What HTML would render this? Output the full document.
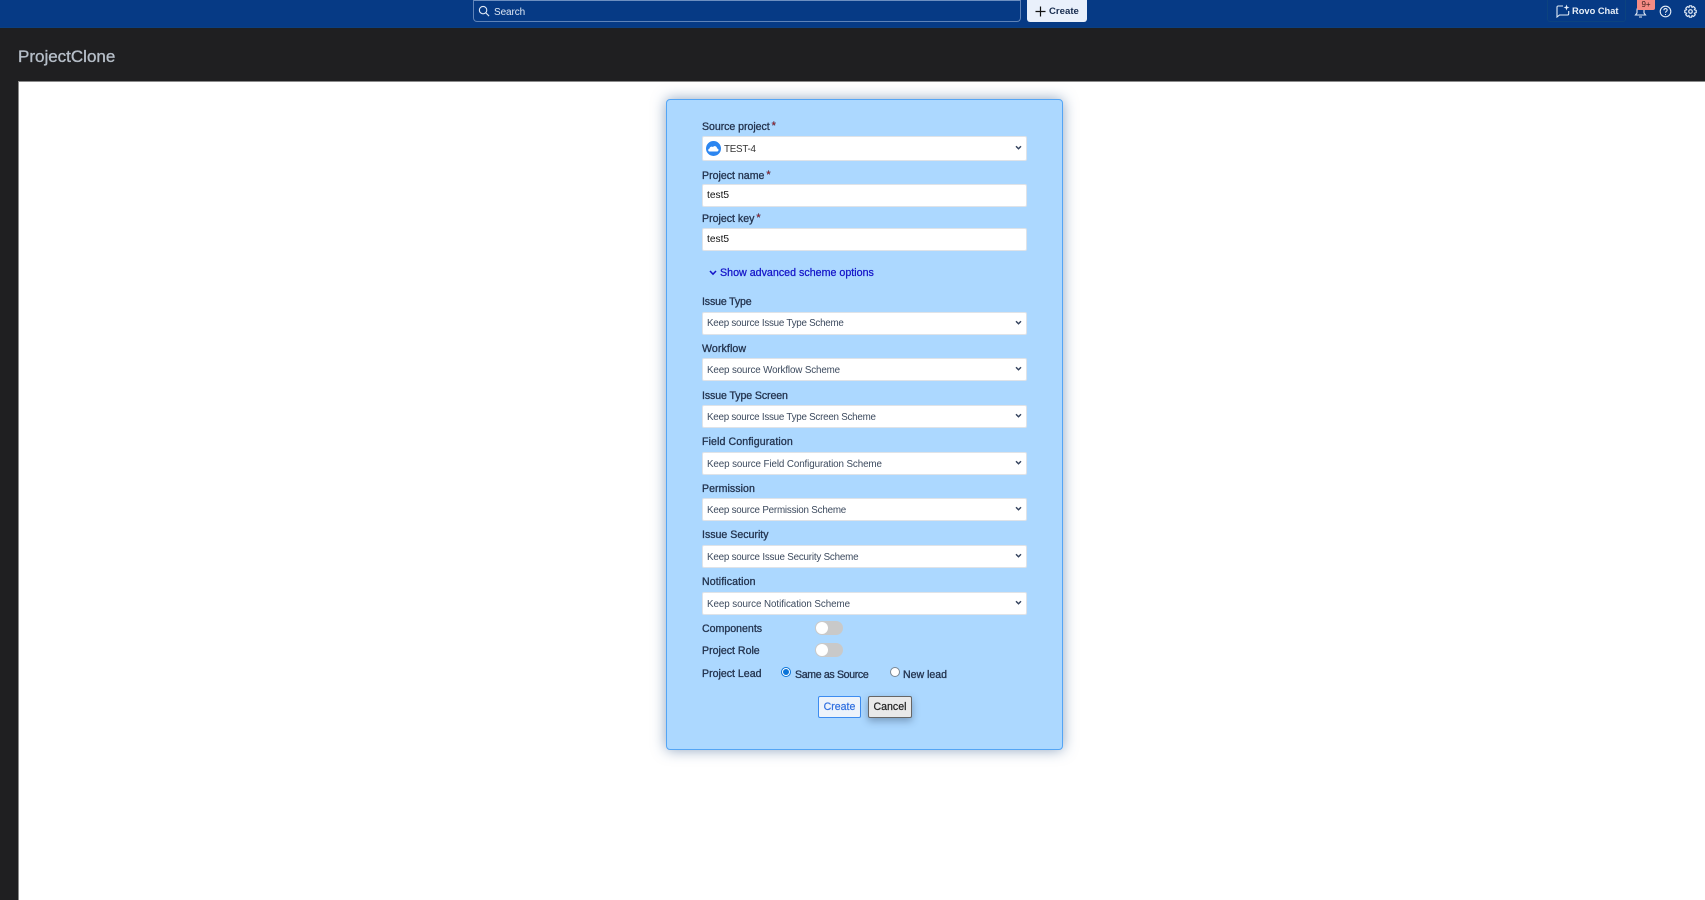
<!DOCTYPE html>
<html lang="en"><head><meta charset="utf-8"><title>ProjectClone</title>
<style>
*{box-sizing:border-box}
html,body{margin:0;padding:0;width:1705px;height:900px;overflow:hidden;background:#1f1f21;font-family:"Liberation Sans",sans-serif}
body{filter:blur(.3px)}
.a{position:absolute;white-space:nowrap}
#top{left:0;top:0;width:1705px;height:28px;background:#063a85;border-bottom:1px solid #0b3f80}
#search{left:473px;top:0;width:548px;height:22px;border:1px solid #5f83b8;border-top-color:#6d8fc0;border-radius:0 0 4px 4px;background:#063a85}
#main{left:18px;top:81px;width:1687px;height:819px;background:#fff;border-top:1px solid #8a8a8a;border-left:1px solid #8a8a8a}
#card{left:666px;top:99px;width:397px;height:651px;background:#acd8ff;border:1px solid #54a5f5;border-radius:4px;box-shadow:0 0 14px rgba(50,90,140,.55)}
.l{left:702px;font-size:10.6px;line-height:14px;color:#24344f;font-weight:400;-webkit-text-stroke:.3px #24344f}
.r{color:#f01515;font-size:11px;position:relative;top:-1px;margin-left:2px}
.s{left:702px;width:325px;height:23px;background:#fff;border:1px solid #dfe3e8;border-radius:2px;font-size:9.8px;letter-spacing:-.24px;line-height:23px;color:#3c4a5e;padding-left:4px}
.i{color:#111;padding-left:4px;font-size:10.2px;letter-spacing:0;line-height:21px;width:325px}
.s svg{position:absolute;right:4px;top:7px}
.t{width:28px;height:14px;border-radius:7px;background:#c9c9c9}
.t i{position:absolute;left:1px;top:1px;width:12px;height:12px;border-radius:50%;background:#fff}
.rad{width:10px;height:10px;border-radius:50%;background:#fff;border:1px solid #7a8794}
.b{height:22px;font-size:10.6px;line-height:20px;text-align:center;border-radius:2px;-webkit-text-stroke:.2px currentColor}
svg{display:block}
</style></head><body>
<div class="a" id="top"></div>
<div class="a" id="search"></div>
<svg class="a" style="left:478px;top:5px" width="12" height="12" viewBox="0 0 13 13" fill="none" stroke="#dfe8f5" stroke-width="1.2"><circle cx="5.5" cy="5.5" r="4"/><path d="M8.5 8.5L12 12"/></svg>
<div class="a" style="left:494px;top:5px;font-size:10px;letter-spacing:-.1px;line-height:15px;color:#dfe8f5">Search</div>
<div class="a" style="left:1027px;top:0;width:60px;height:22px;background:#e9f0fb;border-radius:0 0 3px 3px"></div>
<svg class="a" style="left:1035px;top:6px" width="11" height="11" viewBox="0 0 11 11" stroke="#111" stroke-width="1.2"><path d="M5.5 0.5V10.5M0.5 5.5H10.5"/></svg>
<div class="a" style="left:1049px;top:5px;font-size:9.6px;line-height:14px;color:#172b4d;font-weight:700">Create</div>
<div class="a" style="left:1547px;top:0;width:79px;height:22px;border:1px solid #0c437f;border-top:0;border-radius:0 0 3px 3px"></div>
<svg class="a" style="left:1556px;top:4px" width="14" height="14" viewBox="0 0 14 14" fill="none" stroke="#e3ecf7" stroke-width="1.1"><path d="M7 2H2.2C1.5 2 1 2.5 1 3.2V13L3.5 11H11.5C12.2 11 12.7 10.5 12.7 9.8V7"/><path d="M10.5 0.5L11.3 2.7L13.5 3.5L11.3 4.3L10.5 6.5L9.7 4.3L7.5 3.5L9.7 2.7Z" fill="#e3ecf7" stroke="none"/></svg>
<div class="a" style="left:1572px;top:4px;font-size:9.3px;line-height:14px;color:#e8eff8;font-weight:700">Rovo Chat</div>
<svg class="a" style="left:1634px;top:5px" width="13" height="13" viewBox="0 0 13 13" fill="none" stroke="#e3ecf7" stroke-width="1.1"><path d="M1.5 10H11.5L10 8V4.8C10 2.8 8.5 1.2 6.5 1.2S3 2.8 3 4.8V8ZM5 12H8"/></svg>
<div class="a" style="left:1637px;top:0;width:18px;height:10px;background:#f58b84;border-radius:0 0 2px 2px;font-size:8px;line-height:9px;text-align:center;color:#40201c">9+</div>
<svg class="a" style="left:1659px;top:5px" width="13" height="13" viewBox="0 0 13 13" fill="none" stroke="#e3ecf7" stroke-width="1.1"><circle cx="6.5" cy="6.5" r="5.3"/><path d="M4.9 5.2C4.9 3 8.2 3 8.2 5.1C8.2 6.3 6.5 6.3 6.5 7.7M6.5 9V10"/></svg>
<svg class="a" style="left:1684px;top:5px" width="13" height="13" viewBox="0 0 13 13" fill="none" stroke="#e3ecf7" stroke-width="1.2"><circle cx="6.5" cy="6.5" r="1.8"/><path d="M5.4 .8H7.6L8 2.4L9.5 1.6L11.2 3.2L10.4 4.7L12.2 5.4V7.6L10.4 8.2L11.2 9.8L9.6 11.4L8 10.6L7.6 12.2H5.4L5 10.6L3.4 11.4L1.8 9.8L2.6 8.2L.8 7.6V5.4L2.6 4.7L1.8 3.2L3.4 1.6L5 2.4Z"/></svg>

<div class="a" style="left:18px;top:46px;font-size:17px;line-height:22px;color:#b6bec8;-webkit-text-stroke:.35px #b6bec8">ProjectClone</div>
<div class="a" id="main"></div>
<div class="a" id="card"></div>

<div class="a l" style="top:120px;letter-spacing:-.05px">Source project<span class="r">*</span></div>
<div class="a s" style="top:136px;height:25px;padding-left:21px;line-height:25px;color:#333">TEST-4<svg width="7" height="5" viewBox="0 0 8 6" fill="none" stroke="#33415c" stroke-width="1.7" style="top:8px"><path d="M1 1.5L4 4.5L7 1.5"/></svg></div>
<svg class="a" style="left:706px;top:141px" width="15" height="15" viewBox="0 0 15 15"><circle cx="7.5" cy="7.5" r="7.5" fill="#2c86f0"/><path d="M3.5 10.5C1.8 10.5 1.8 7.8 3.5 7.6C3.7 5.8 5.8 5 7 6C8 4.4 11 5 11 7.4C13 7.6 13 10.5 11 10.5Z" fill="#fff"/></svg>

<div class="a l" style="top:169px">Project name<span class="r">*</span></div>
<div class="a s i" style="top:184px">test5</div>
<div class="a l" style="top:212px">Project key<span class="r">*</span></div>
<div class="a s i" style="top:228px">test5</div>

<svg class="a" style="left:709px;top:270px" width="8" height="6" viewBox="0 0 8 6" fill="none" stroke="#1414c8" stroke-width="1.5"><path d="M1 1L4 4.2L7 1"/></svg>
<div class="a" style="left:720px;top:266px;font-size:10.7px;line-height:14px;color:#1414c8;-webkit-text-stroke:.25px #1414c8">Show advanced scheme options</div>

<div class="a l" style="top:295px;letter-spacing:-.15px">Issue Type</div>
<div class="a s" style="top:312px;line-height:22px">Keep source Issue Type Scheme<svg width="7" height="5" viewBox="0 0 8 6" fill="none" stroke="#33415c" stroke-width="1.7"><path d="M1 1.5L4 4.5L7 1.5"/></svg></div>
<div class="a l" style="top:342px;letter-spacing:.1px">Workflow</div>
<div class="a s" style="top:358px;letter-spacing:-.13px">Keep source Workflow Scheme<svg width="7" height="5" viewBox="0 0 8 6" fill="none" stroke="#33415c" stroke-width="1.7"><path d="M1 1.5L4 4.5L7 1.5"/></svg></div>
<div class="a l" style="top:389px;letter-spacing:-.1px">Issue Type Screen</div>
<div class="a s" style="top:405px">Keep source Issue Type Screen Scheme<svg width="7" height="5" viewBox="0 0 8 6" fill="none" stroke="#33415c" stroke-width="1.7"><path d="M1 1.5L4 4.5L7 1.5"/></svg></div>
<div class="a l" style="top:435px;letter-spacing:.1px">Field Configuration</div>
<div class="a s" style="top:452px;letter-spacing:-.1px">Keep source Field Configuration Scheme<svg width="7" height="5" viewBox="0 0 8 6" fill="none" stroke="#33415c" stroke-width="1.7"><path d="M1 1.5L4 4.5L7 1.5"/></svg></div>
<div class="a l" style="top:482px;letter-spacing:.05px">Permission</div>
<div class="a s" style="top:498px;letter-spacing:-.2px">Keep source Permission Scheme<svg width="7" height="5" viewBox="0 0 8 6" fill="none" stroke="#33415c" stroke-width="1.7"><path d="M1 1.5L4 4.5L7 1.5"/></svg></div>
<div class="a l" style="top:528px">Issue Security</div>
<div class="a s" style="top:545px;letter-spacing:-.2px">Keep source Issue Security Scheme<svg width="7" height="5" viewBox="0 0 8 6" fill="none" stroke="#33415c" stroke-width="1.7"><path d="M1 1.5L4 4.5L7 1.5"/></svg></div>
<div class="a l" style="top:575px;letter-spacing:.1px">Notification</div>
<div class="a s" style="top:592px;letter-spacing:-.06px">Keep source Notification Scheme<svg width="7" height="5" viewBox="0 0 8 6" fill="none" stroke="#33415c" stroke-width="1.7"><path d="M1 1.5L4 4.5L7 1.5"/></svg></div>

<div class="a l" style="top:622px">Components</div>
<div class="a t" style="left:815px;top:621px"><i></i></div>
<div class="a l" style="top:644px">Project Role</div>
<div class="a t" style="left:815px;top:643px"><i></i></div>
<div class="a l" style="top:667px">Project Lead</div>
<div class="a rad" style="left:781px;top:667px;border:1px solid #0a74d9"></div>
<div class="a" style="left:783px;top:669px;width:6px;height:6px;border-radius:50%;background:#0a74d9"></div>
<div class="a l" style="left:795px;top:668px;letter-spacing:-.35px">Same as Source</div>
<div class="a rad" style="left:890px;top:667px"></div>
<div class="a l" style="left:903px;top:668px;letter-spacing:-.03px">New lead</div>

<div class="a b" style="left:818px;top:696px;width:43px;background:#edf3fb;border:1px solid #3d8cf0;color:#2f6fe0">Create</div>
<div class="a b" style="left:868px;top:696px;width:44px;background:#e9e9e9;border:1px solid #666;color:#222;box-shadow:0 3px 8px rgba(40,60,90,.4)">Cancel</div>
</body></html>
